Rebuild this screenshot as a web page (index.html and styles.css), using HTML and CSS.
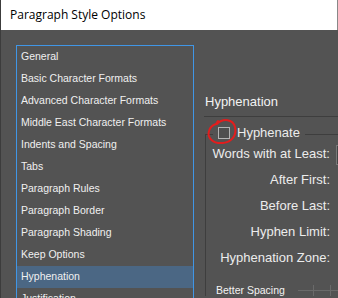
FILE: index.html
```html
<!DOCTYPE html>
<html lang="en">
<head>
  <meta charset="UTF-8">
  <meta name="viewport" content="width=device-width, initial-scale=1">
  <title>Paragraph Style Options</title>
  <link rel="stylesheet" href="styles.css">
</head>
<body>

<div class="window">
  <div class="titlebar">Paragraph Style Options</div>

  <div class="dialog">
    <ul class="nav">
      <li>General</li>
      <li>Basic Character Formats</li>
      <li>Advanced Character Formats</li>
      <li>Middle East Character Formats</li>
      <li>Indents and Spacing</li>
      <li>Tabs</li>
      <li>Paragraph Rules</li>
      <li>Paragraph Border</li>
      <li>Paragraph Shading</li>
      <li>Keep Options</li>
      <li class="selected">Hyphenation</li>
      <li>Justification</li>
    </ul>

    <div class="panel">
      <h2 class="panel-title">Hyphenation</h2>

      <fieldset class="group">
        <legend>
          <label class="check">
            <span class="box"></span>
            Hyphenate
          </label>
        </legend>

        <div class="fields">
          <span class="label">Words with at Least:</span><span class="input"></span>
          <span class="label">After First:</span><span class="input spin"></span>
          <span class="label">Before Last:</span><span class="input spin"></span>
          <span class="label">Hyphen Limit:</span><span class="input spin"></span>
          <span class="label">Hyphenation Zone:</span><span class="input spin"></span>
        </div>

        <div class="spacing">
          <span>Better Spacing</span>
          <div class="slider">
            <i></i><i></i>
          </div>
        </div>
      </fieldset>
    </div>
  </div>

  <!-- red mark round the checkbox -->
  <svg class="mark" width="338" height="298" viewBox="0 0 338 298">
    <path d="M216 124 C222 118, 232 119, 234 127 C236 135, 231 142, 222 143 C212 144, 206 138, 208 131 C209 127, 212 125, 215 124 L217 121"
          fill="none" stroke="#e21d1d" stroke-width="2" stroke-linecap="round"/>
  </svg>
</div>

</body>
</html>
```

FILE: styles.css
```css
body {
  margin: 0;
  background: #535353;
  font-family: "Liberation Sans", Arial, sans-serif;
}
.window {
  position: relative;
  width: 338px;
  height: 298px;
  overflow: hidden;
  background: #535353;
  border-left: 1px solid #3c3c3c;
  box-sizing: border-box;
}
.titlebar {
  height: 30px;
  line-height: 30px;
  margin-left: -1px;
  padding-left: 9px;
  background: #fff;
  color: #000;
  font-family: "Open Sans", "Liberation Sans", sans-serif;
  font-size: 12px;
  border-left: 1px solid #555;
  border-right: 1px solid #888;
}
.dialog {
  display: flex;
  align-items: flex-start;
  padding: 15px 0 0 15px;
}
.nav {
  list-style: none;
  margin: 0;
  padding: 0;
  width: 176px;
  flex-shrink: 0;
  border: 1px solid #4096e6;
  border-bottom: none;
}
.nav li {
  height: 22px;
  line-height: 21px;
  padding-left: 4px;
  font-size: 10.5px;
  color: #f0f0f0;
  white-space: nowrap;
}
.nav li.selected {
  background: #4b6784;
}
.panel {
  flex: 1;
  margin-left: 10px;
  min-width: 0;
}
.panel-title {
  margin: 49px 0 0 0;
  padding: 0 0 6px 1px;
  font-size: 13px;
  font-weight: normal;
  line-height: 16px;
  color: #f2f2f2;
  border-bottom: 1px solid #3e3e3e;
  margin-right: -40px;
}
.group {
  margin: 8px -40px 0 1px;
  padding: 0;
  border: 1px solid #3e3e3e;
  border-right: none;
  border-bottom: none;
  color: #ececec;
}
.group legend {
  margin-left: 7px;
  padding: 0 5px 0 0;
}
.check {
  display: inline-flex;
  align-items: center;
  gap: 7px;
  font-size: 13px;
  line-height: 16px;
}
.box {
  width: 10px;
  height: 10px;
  margin-left: 5px;
  border: 1px solid #b4b4b4;
  background: #4f4f4f;
}
.fields {
  display: grid;
  grid-template-columns: 124px 60px;
  column-gap: 6px;
  row-gap: 0;
  margin-top: -2px;
}
.fields .label {
  height: 26px;
  line-height: 26px;
  text-align: right;
  font-size: 13px;
  white-space: nowrap;
}
.fields .input {
  height: 18px;
  margin-top: 4px;
  background: #454545;
  border: 1px solid #787878;
}
.fields .input.spin {
  margin-left: 8px;
}
.spacing {
  display: flex;
  align-items: center;
  margin: 13px 0 0 10px;
  font-size: 10.5px;
  color: #f2f2f2;
}
.slider {
  position: relative;
  flex: 1;
  height: 1px;
  margin-left: 13px;
  background: #6a6a6a;
}
.slider i {
  position: absolute;
  top: -5px;
  width: 1px;
  height: 11px;
  background: #6a6a6a;
}
.slider i:first-child {
  left: 15px;
}
.slider i:last-child {
  left: 32px;
}
.mark {
  position: absolute;
  left: 0;
  top: 0;
  pointer-events: none;
}
```
